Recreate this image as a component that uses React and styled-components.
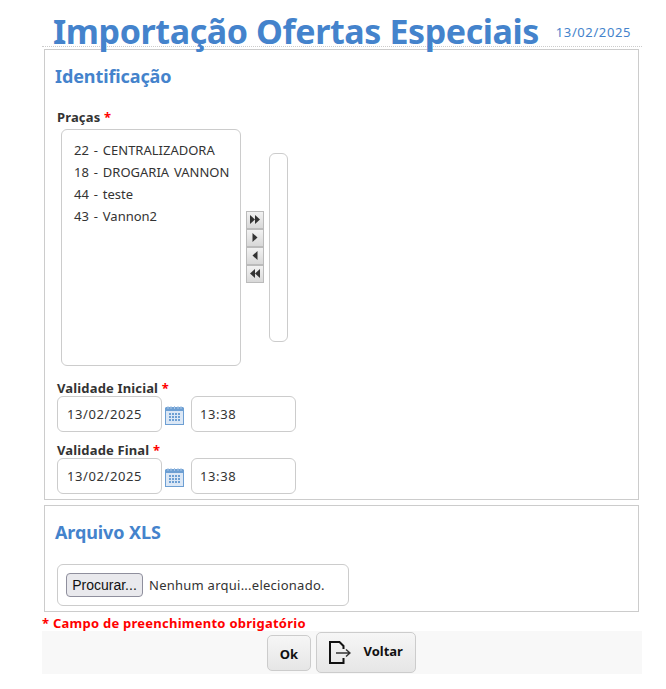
import React from "react";
import styled, {createGlobalStyle} from "styled-components";

const GlobalStyle = createGlobalStyle`
  html, body {
    margin: 0;
    padding: 0;
    background: #fff;
    font-family: "Noto Sans", "Open Sans", sans-serif;
    color: #333;
  }
`;

const BLUE = "#4483cc";

const Triangle = ({dir, x}) => (
  <polygon
    points={dir === "right" ? `${x},0 ${x + 5},4.5 ${x},9` : `${x + 5},0 ${x},4.5 ${x + 5},9`}
    fill="#333"
  />
);

const MoveIcon = ({dir, double}) => (
  <svg width="12" height="9" viewBox="0 0 12 9">
    {double ? (
      <>
        <Triangle dir={dir} x={1} />
        <Triangle dir={dir} x={6} />
      </>
    ) : (
      <Triangle dir={dir} x={3.5} />
    )}
  </svg>
);

const CalendarIcon = () => (
  <CalSvg width="19" height="19" viewBox="0 0 19 19">
    <rect x="0.5" y="2.5" width="18" height="16" fill="#dbe7f5" stroke="#6d9fd3" />
    <rect x="0.5" y="1" width="18" height="4" fill="#6d9fd3" />
    <path d="M3 0v3M6 0v3M9.500 0v3M13 0v3M16 0v3" stroke="#a9c6e6" strokeWidth="1" />
    {[7, 10, 13].map(y =>
      [4, 7, 10, 13].map(x => <rect key={`${x}-${y}`} x={x} y={y} width="2" height="2" fill="#6d9fd3" />)
    )}
  </CalSvg>
);

const ExitIcon = () => (
  <svg width="22" height="23" viewBox="0 0 22 23" fill="none">
    <path d="M14.500 8V5L10.500 1H1v21h13.500v-5" stroke="#111" strokeWidth="2" />
    <path d="M7 12h13M17 8.500l4 3.500-4 3.500" stroke="#333" strokeWidth="1.500" />
  </svg>
);

const DateTimeRow = ({label, date, time}) => (
  <Field>
    <Label>{label} <Star>*</Star></Label>
    <InputRow>
      <TextBox $pad={9}>{date}</TextBox>
      <CalendarIcon />
      <TextBox $pad={8}>{time}</TextBox>
    </InputRow>
  </Field>
);

export default function App() {
  const pracas = ["22 - CENTRALIZADORA", "18 - DROGARIA VANNON", "44 - teste", "43 - Vannon2"];
  return (
    <Page>
      <GlobalStyle />
      <Header>
        <Title>Importação Ofertas Especiais</Title>
        <DateText>13/02/2025</DateText>
      </Header>
      <Panel $h={451}>
        <SectionTitle>Identificação</SectionTitle>
        <Label $top={20}>Praças <Star>*</Star></Label>
        <Shuttle>
          <ListBox>
            {pracas.map(p => <li key={p}>{p}</li>)}
          </ListBox>
          <Arrows>
            <ArrowBtn><MoveIcon dir="right" double /></ArrowBtn>
            <ArrowBtn><MoveIcon dir="right" /></ArrowBtn>
            <ArrowBtn><MoveIcon dir="left" /></ArrowBtn>
            <ArrowBtn><MoveIcon dir="left" double /></ArrowBtn>
          </Arrows>
          <EmptyList />
        </Shuttle>
        <DateTimeRow label="Validade Inicial" date="13/02/2025" time="13:38" />
        <DateTimeRow label="Validade Final" date="13/02/2025" time="13:38" />
      </Panel>
      <Panel $h={107} $top={5}>
        <SectionTitle>Arquivo XLS</SectionTitle>
        <FileBox>
          <FileButton>Procurar...</FileButton>
          <FileName>Nenhum arqui...elecionado.</FileName>
        </FileBox>
      </Panel>
      <Required>* Campo de preenchimento obrigatório</Required>
      <Footer>
        <OkButton>Ok</OkButton>
        <BackButton><ExitIcon /><span>Voltar</span></BackButton>
      </Footer>
    </Page>
  );
}

const Page = styled.div`
  width: 600px;
  margin-left: 42px;
`;

const Header = styled.div`
  display: flex;
  align-items: flex-start;
  justify-content: space-between;
  height: 47px;
  padding: 0 11px;
  box-sizing: border-box;
  border-bottom: 1px dotted #ccc;
  margin-bottom: 2px;
`;

const Title = styled.h1`
  margin: 8px 0 0;
  font-size: 34px;
  line-height: 46px;
  font-weight: 700;
  color: ${BLUE};
  white-space: nowrap;
  letter-spacing: -0.4px;
`;

const DateText = styled.span`
  margin-top: 23px;
  font-size: 13px;
  line-height: 18px;
  color: ${BLUE};
  letter-spacing: 0.6px;
`;

const Panel = styled.section`
  box-sizing: border-box;
  width: 595px;
  height: ${props => props.$h}px;
  margin: ${props => props.$top || 0}px 0 0 2px;
  border: 1px solid #ccc;
  padding: 14px 0 0 10px;
`;

const SectionTitle = styled.h2`
  margin: 0;
  font-size: 18px;
  line-height: 25px;
  font-weight: 700;
  color: ${BLUE};
  letter-spacing: -0.1px;
`;

const Label = styled.div`
  margin: ${props => props.$top || 0}px 0 0;
  padding-left: 2px;
  font-size: 13px;
  line-height: 16px;
  font-weight: 700;
  color: #333;
  letter-spacing: 0.15px;
`;

const Star = styled.span`
  color: #f00;
`;

const Shuttle = styled.div`
  display: flex;
  align-items: center;
  margin: 4px 0 0 6px;
`;

const ListBox = styled.ul`
  box-sizing: border-box;
  width: 180px;
  height: 237px;
  margin: 0;
  padding: 9px 0 0 12px;
  list-style: none;
  border: 1px solid #ccc;
  border-radius: 6px;
  font-size: 13px;
  line-height: 22px;
  color: #333;
  white-space: nowrap;
  word-spacing: 1.5px;
`;

const Arrows = styled.div`
  display: flex;
  flex-direction: column;
  margin: 0 5px 2px;
`;

const ArrowBtn = styled.div`
  box-sizing: border-box;
  width: 18px;
  height: 18px;
  display: flex;
  align-items: center;
  justify-content: center;
  background: linear-gradient(#f2f2f2, #d8d8d8);
  border: 1px solid #bbb;
`;

const EmptyList = styled.div`
  box-sizing: border-box;
  width: 19px;
  height: 189px;
  border: 1px solid #ccc;
  border-radius: 6px;
`;

const Field = styled.div`
  margin-top: 14px;
  &:last-child {
    margin-top: 10px;
  }
`;

const InputRow = styled.div`
  display: flex;
  align-items: center;
  margin-left: 2px;
`;

const TextBox = styled.div`
  box-sizing: border-box;
  width: 105px;
  height: 36px;
  padding-left: ${props => props.$pad}px;
  border: 1px solid #ccc;
  border-radius: 6px;
  font-size: 13px;
  line-height: 35px;
  color: #333;
  letter-spacing: 0.6px;
`;

const CalSvg = styled.svg`
  margin: 2px 7px 0 3px;
`;

const FileBox = styled.div`
  box-sizing: border-box;
  display: flex;
  align-items: center;
  gap: 6px;
  width: 292px;
  height: 42px;
  margin: 19px 0 0 2px;
  padding-left: 8px;
  border: 1px solid #ccc;
  border-radius: 6px;
`;

const FileName = styled.span`
  font-size: 13px;
  color: #333;
  letter-spacing: 0.25px;
`;

const FileButton = styled.div`
  box-sizing: border-box;
  height: 24px;
  width: 77px;
  background: #e9e9ed;
  border: 1px solid #8f8f9d;
  border-radius: 4px;
  font-family: "Liberation Sans", sans-serif;
  font-size: 14px;
  line-height: 22px;
  text-align: center;
  color: #111;
`;

const Required = styled.div`
  height: 19px;
  font-size: 13px;
  line-height: 22px;
  font-weight: 700;
  color: #f00;
  letter-spacing: 0.25px;
`;

const Footer = styled.div`
  display: flex;
  align-items: center;
  justify-content: center;
  gap: 5px;
  height: 43px;
  padding-right: 2px;
  background: #f8f8f8;
  box-sizing: border-box;
`;

const OkButton = styled.div`
  box-sizing: border-box;
  width: 44px;
  height: 36px;
  padding-left: 1px;
  border: 1px solid #ccc;
  border-radius: 5px;
  background: linear-gradient(#f6f6f6, #e6e6e6);
  font-size: 13px;
  font-weight: 700;
  line-height: 36px;
  text-align: center;
  color: #111;
`;

const BackButton = styled.div`
  box-sizing: border-box;
  width: 100px;
  height: 41px;
  display: flex;
  align-items: center;
  gap: 13px;
  padding: 0 0 0 12px;
  border: 1px solid #ccc;
  border-radius: 5px;
  background: linear-gradient(#f6f6f6, #e6e6e6);
  font-size: 13px;
  font-weight: 700;
  color: #111;
  span {
    margin-top: -3px;
  }
`;
